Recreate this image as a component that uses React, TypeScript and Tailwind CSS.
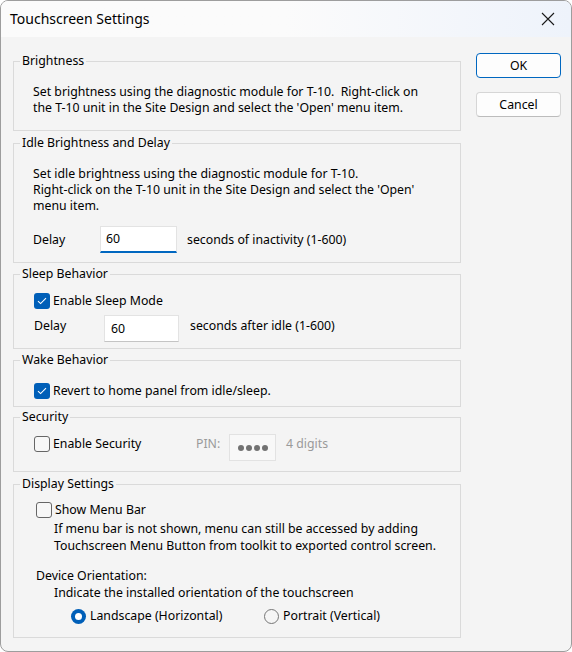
import React from "react";

const font = { fontFamily: '"Noto Sans", "Liberation Sans", Arial, sans-serif' };

function CheckBox(props: { checked?: boolean }) {
  if (props.checked) {
    return (
      <span className="flex h-[16px] w-[16px] shrink-0 items-center justify-center rounded-[3px] bg-[#005fb8]">
        <svg width="10" height="8" viewBox="0 0 10 8" fill="none">
          <path d="M1 4.2 L3.6 6.6 L9 1.2" stroke="white" strokeWidth="1.1" />
        </svg>
      </span>
    );
  }
  return (
    <span className="block h-[16px] w-[16px] shrink-0 rounded-[3px] border border-[#666666] bg-[#f7f7f7]" />
  );
}

function Radio(props: { checked?: boolean }) {
  if (props.checked) {
    return (
      <span className="flex h-[15px] w-[15px] shrink-0 items-center justify-center rounded-full bg-[#005fb8]">
        <span className="block h-[7px] w-[7px] rounded-full bg-white" />
      </span>
    );
  }
  return (
    <span className="block h-[15px] w-[15px] shrink-0 rounded-full border border-[#767676] bg-[#f5f5f5]" />
  );
}

function Group(props: {
  title: string;
  className?: string;
  inner: string;
  children: React.ReactNode;
}) {
  return (
    <fieldset className={"border border-[#dadada] " + (props.className ?? "")}>
      <legend className="ml-[6px] px-[2px] text-[12.3px] leading-[16px] text-black">
        {props.title}
      </legend>
      <div className={props.inner}>{props.children}</div>
    </fieldset>
  );
}

function PinDots() {
  return (
    <div className="flex h-[27px] w-[47px] items-center justify-center gap-[2px] border border-[#e2e2e2] bg-[#f8f8f8]">
      {[0, 1, 2, 3].map((i) => (
        <span key={i} className="block h-[6px] w-[6px] rounded-full bg-[#727272]" />
      ))}
    </div>
  );
}

export default function App() {
  return (
    <div
      style={font}
      className="flex h-[652px] w-[572px] flex-col overflow-hidden rounded-[8px] border border-[#9d9d9d] bg-[#f4f4f4] text-[12.3px] leading-[16px] text-black"
    >
      {/* title bar */}
      <div className="flex h-[36px] shrink-0 items-center justify-between bg-linear-to-r from-[#fbfbfb] via-[#fbfbfb] to-[#eef3fb] pl-[9px]">
        <span className="text-[14px]">Touchscreen Settings</span>
        <div className="flex h-[36px] w-[46px] items-center justify-center">
          <svg width="14" height="14" viewBox="0 0 14 14">
            <path d="M1 1 L13 13 M13 1 L1 13" stroke="#1a1a1a" strokeWidth="1.1" />
          </svg>
        </div>
      </div>

      <div className="flex pt-[16px]">
        <div className="ml-[12px] flex w-[448px] flex-col">
          <Group title="Brightness" inner="pl-[19px] pt-[15px] pb-[14px]">
            <p>Set brightness using the diagnostic module for T-10.&nbsp; Right-click on</p>
            <p>the T-10 unit in the Site Design and select the 'Open' menu item.</p>
          </Group>

          <Group title="Idle Brightness and Delay" className="mt-[4px]" inner="pl-[19px] pt-[15px] pb-[9px]">
            <p>Set idle brightness using the diagnostic module for T-10.</p>
            <p>Right-click on the T-10 unit in the Site Design and select the 'Open'</p>
            <p>menu item.</p>
            <div className="mt-[12px] flex items-center">
              <span className="w-[67px]">Delay</span>
              <div className="flex h-[27px] w-[77px] items-center border border-b-2 border-[#e3e3e3] border-b-[#0067c0] bg-white pl-[5px]">
                60
              </div>
              <span className="ml-[10px]">seconds of inactivity (1-600)</span>
            </div>
          </Group>

          <Group title="Sleep Behavior" className="mt-[3px]" inner="pl-[20px] pt-[11px] pb-[6px]">
            <div className="flex items-center gap-[3px]">
              <CheckBox checked />
              <span>Enable Sleep Mode</span>
            </div>
            <div className="mt-[6px] flex items-start">
              <span className="mt-[3px] w-[70px]">Delay</span>
              <div className="flex h-[27px] w-[75px] items-center border border-[#e3e3e3] border-b-[#c4c4c4] bg-white pl-[6px]">
                60
              </div>
              <span className="ml-[11px] mt-[3px]">seconds after idle (1-600)</span>
            </div>
          </Group>

          <Group title="Wake Behavior" className="mt-[3px]" inner="pl-[20px] pt-[15px] pb-[7px]">
            <div className="flex items-center gap-[3px]">
              <CheckBox checked />
              <span>Revert to home panel from idle/sleep.</span>
            </div>
          </Group>

          <Group title="Security" className="mt-[2px]" inner="pl-[20px] pt-[9px] pb-[10px]">
            <div className="flex items-start">
              <div className="mt-[2px] flex w-[162px] items-center gap-[3px]">
                <CheckBox />
                <span>Enable Security</span>
              </div>
              <span className="mt-[2px] w-[33px] text-[#9a9a9a]">PIN:</span>
              <PinDots />
              <span className="ml-[10px] mt-[2px] text-[#9a9a9a]">4 digits</span>
            </div>
          </Group>

          <Group title="Display Settings" className="mt-[4px]" inner="pl-[22px] pt-[10px] pb-[13px]">
            <div className="flex items-center gap-[3px]">
              <CheckBox />
              <span>Show Menu Bar</span>
            </div>
            <div className="ml-[18px] mt-[2px] leading-[17px]">
              <p>If menu bar is not shown, menu can still be accessed by adding</p>
              <p>Touchscreen Menu Button from toolkit to exported control screen.</p>
            </div>
            <p className="mt-[13px] leading-[17px]">Device Orientation:</p>
            <p className="ml-[18px] leading-[17px]">Indicate the installed orientation of the touchscreen</p>
            <div className="ml-[35px] mt-[7px] flex items-center">
              <div className="flex w-[193px] items-center gap-[4px]">
                <Radio checked />
                <span>Landscape (Horizontal)</span>
              </div>
              <div className="flex items-center gap-[4px]">
                <Radio />
                <span>Portrait (Vertical)</span>
              </div>
            </div>
          </Group>
        </div>

        <div className="ml-[15px] flex w-[85px] flex-col gap-[14px]">
          <button className="h-[25px] rounded-[4px] border border-[#0067c0] bg-[#fdfdfd] text-[12.3px]">
            OK
          </button>
          <button className="h-[25px] rounded-[4px] border border-[#d6d6d6] border-b-[#bcbcbc] bg-[#fdfdfd] text-[12.3px]">
            Cancel
          </button>
        </div>
      </div>
    </div>
  );
}
